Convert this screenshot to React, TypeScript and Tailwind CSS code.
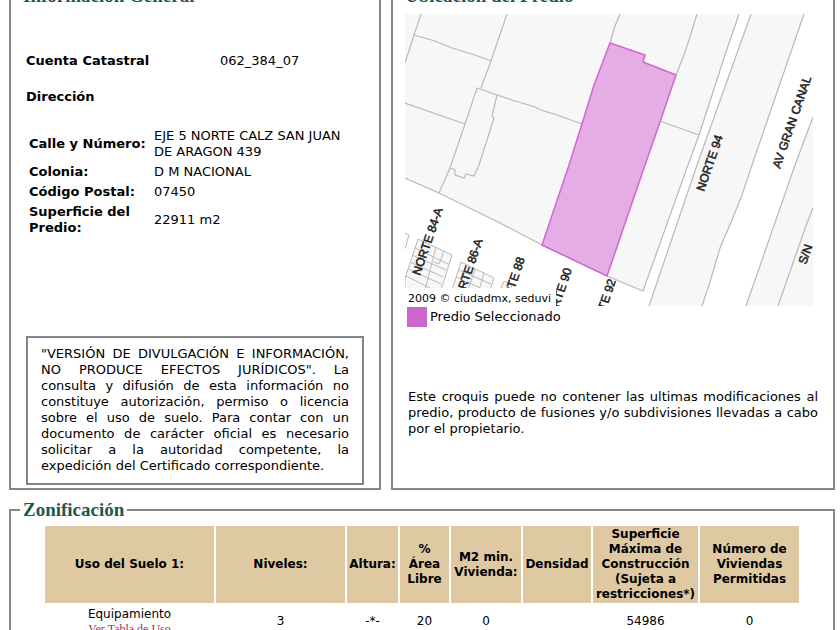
import React from "react";

const direccion = [
  { label: "Calle y Número:", value: "EJE 5 NORTE CALZ SAN JUAN DE ARAGON 439" },
  { label: "Colonia:", value: "D M NACIONAL" },
  { label: "Código Postal:", value: "07450" },
  { label: "Superficie del Predio:", value: "22911 m2" },
];

const columnas = [
  { titulo: "Uso del Suelo 1:", width: "w-[169px]" },
  { titulo: "Niveles:", width: "w-[129px]" },
  { titulo: "Altura:", width: "w-[51px]" },
  { titulo: "% Área Libre", width: "w-[49px]" },
  { titulo: "M2 min. Vivienda:", width: "w-[70px]" },
  { titulo: "Densidad", width: "w-[68px]" },
  { titulo: "Superficie Máxima de Construcción (Sujeta a restricciones*)", width: "w-[105px]" },
  { titulo: "Número de Viviendas Permitidas", width: "w-[99px]" },
];

const valores = ["3", "-*-", "20", "0", "", "54986", "0"];

const calles = [
  { nombre: "NORTE 84-A", x: 420, y: 276 },
  { nombre: "NORTE 86-A", x: 460, y: 307 },
  { nombre: "NORTE 88", x: 506, y: 314 },
  { nombre: "NORTE 90", x: 553, y: 325 },
  { nombre: "NORTE 92", x: 597, y: 336 },
  { nombre: "NORTE 94", x: 704, y: 192 },
  { nombre: "AV GRAN CANAL", x: 780, y: 169 },
  { nombre: "S/N", x: 806, y: 265 },
];

const Panel: React.FC<{ titulo: string; children: React.ReactNode }> = ({ titulo, children }) => (
  <fieldset className="min-w-0 border-2 border-[#858585]">
    <legend className="ml-[9px] px-[3px] font-['Liberation_Serif',serif] text-[19px] leading-[22px] font-bold text-[#1b5a4c]">
      {titulo}
    </legend>
    {children}
  </fieldset>
);

const Croquis = () => (
  <svg
    viewBox="405 14 408 292"
    className="block h-[292px] w-[408px]"
    role="img"
    aria-label="Croquis de ubicación"
  >
    {/* manzanas */}
    <g fill="#f7f7f7" stroke="none">
      <path d="M405 14H739L724 58 713 92 699 135 688 165 643 291 607 276 542 245 439 193 405 178Z" />
      <path d="M751 14H804L752 165 742 195 732 220 720 248 710 282 702 306H649L697 165Z" />
      <path d="M813 117 795 165 746 306H813Z" />
    </g>
    <g fill="none" stroke="#b9b9b9" strokeWidth="1.2">
      <path d="M739 14 724 58 713 92 699 135 688 165 643 291 607 276 542 245 500 223 439 193 405 178" />
      <path d="M751 14 697 165 649 306M804 14 752 165 742 195 732 220 720 248 710 282 702 306" />
      <path d="M813 117 795 165 746 306M813 208 807 223 800 243 794 260 778 306" />
      <path d="M421 14 414 35 405 63M414 35 435 41 452 48 475 55 491 61" />
      <path d="M507 14 491 61 481 88M405 103 465 124" />
      <path d="M439 193 450 168 465 124 477 88 497 95 512 100 535 107 541 110 557 115 582 124" />
      <path d="M497 95 492 116 494 118 479 165 474 176 466 174 464 178 455 175 455 170 450 168" />
      <path d="M620 14 615 26 610 43M697 14 689 40 684 55 676 75M660 121 699 135" />
    </g>
    {/* lotes pequeños */}
    <g fill="#f7f7f7" stroke="#b9b9b9">
      <path d="M405 233 409 235 405 249" />
      <path d="M418 239 452 255 441 290H405V278Z" />
      <path d="M461 262 494 278 490 290H452Z" />
      <path d="M504 281 512 285 510 290H500Z" />
      <path
        fill="none"
        d="M436 247 425 290M444 251 439 264 434 262M415 248 448 264M412 255 446 270M410 262 443 277M408 269 441 284M406 276 430 288M475 269 468 290M484 273 479 290M459 270 491 284M456 277 480 288"
      />
    </g>
    <path
      d="M610 43 645 55 643 62 676 75 660 122 645 165 607 276 542 245 569 165 582 124 594 85Z"
      fill="#e5ade5"
      stroke="#d166d1"
      strokeWidth="1.5"
    />
    <g fontFamily="'Liberation Sans', sans-serif" fontSize="12" fill="#222" stroke="#222" strokeWidth="0.5">
      {calles.map((calle) => (
        <text key={calle.nombre} transform={`translate(${calle.x} ${calle.y}) rotate(-71)`}>
          {calle.nombre}
        </text>
      ))}
    </g>
    <path d="M405 288H556V306H405Z" fill="#fff" />
    <text x="408" y="302" fontFamily="'DejaVu Sans', sans-serif" fontSize="11" fill="#000">
      2009 © ciudadmx, seduvi
    </text>
  </svg>
);

const App = () => {
  return (
    <div className="h-screen overflow-hidden bg-white pr-[5px] pl-[9px] font-['DejaVu_Sans',sans-serif] text-[13px] leading-4 text-black">
      <div className="-mt-[15px] grid grid-cols-[372fr_444fr] gap-[10px]">
        <Panel titulo="Información General">
          <div className="px-[15px] pt-[46px] pb-[3px]">
            <dl className="flex">
              <dt className="w-[194px] font-bold">Cuenta Catastral</dt>
              <dd>062_384_07</dd>
            </dl>
            <h2 className="mt-5 font-bold">Dirección</h2>
            <table className="mt-5 border-separate border-spacing-[2px]">
              <tbody>
                {direccion.map((fila) => (
                  <tr key={fila.label}>
                    <th scope="row" className="w-[123px] p-px text-left font-bold">
                      {fila.label}
                    </th>
                    <td className="w-[200px] p-px">{fila.value}</td>
                  </tr>
                ))}
              </tbody>
            </table>
            <p className="mt-[97px] border-2 border-[#858585] px-[13px] pt-2 pb-[9px] text-justify">
              "VERSIÓN DE DIVULGACIÓN E INFORMACIÓN, NO PRODUCE EFECTOS JURÍDICOS". La consulta y
              difusión de esta información no constituye autorización, permiso o licencia sobre el
              uso de suelo. Para contar con un documento de carácter oficial es necesario solicitar
              a la autoridad competente, la expedición del Certificado correspondiente.
            </p>
          </div>
        </Panel>

        <Panel titulo="Ubicación del Predio">
          <div className="pt-[7px] pr-[15px] pl-3">
            <Croquis />
            <div className="mt-px ml-[2px] flex items-center gap-[3px]">
              <span className="size-5 bg-[#cc66cc]"></span>
              <span>Predio Seleccionado</span>
            </div>
            <p className="mt-[62px] ml-[3px] text-justify">
              Este croquis puede no contener las ultimas modificaciones al predio, producto de
              fusiones y/o subdivisiones llevadas a cabo por el propietario.
            </p>
          </div>
        </Panel>
      </div>

      <div className="mt-[9px]">
        <Panel titulo="Zonificación">
          <div className="mr-[33px] ml-8 pt-[3px]">
            <table className="w-full table-fixed border-separate border-spacing-[2px] text-center text-[12px]">
              <thead>
                <tr>
                  {columnas.map((columna) => (
                    <th
                      key={columna.titulo}
                      scope="col"
                      className={`${columna.width} bg-[#dec9a3] p-px text-[12px] leading-[15px] font-bold`}
                    >
                      {columna.titulo}
                    </th>
                  ))}
                </tr>
              </thead>
              <tbody>
                <tr>
                  <td className="p-px">
                    Equipamiento
                    <a
                      href="#tabla-de-uso"
                      className="block font-['Liberation_Serif',serif] text-[12px] leading-[14px] text-[#993355]"
                    >
                      Ver Tabla de Uso
                    </a>
                  </td>
                  {valores.map((valor, i) => (
                    <td key={i} className="p-px">
                      {valor}
                    </td>
                  ))}
                </tr>
              </tbody>
            </table>
          </div>
        </Panel>
      </div>
    </div>
  );
};

export default App;
